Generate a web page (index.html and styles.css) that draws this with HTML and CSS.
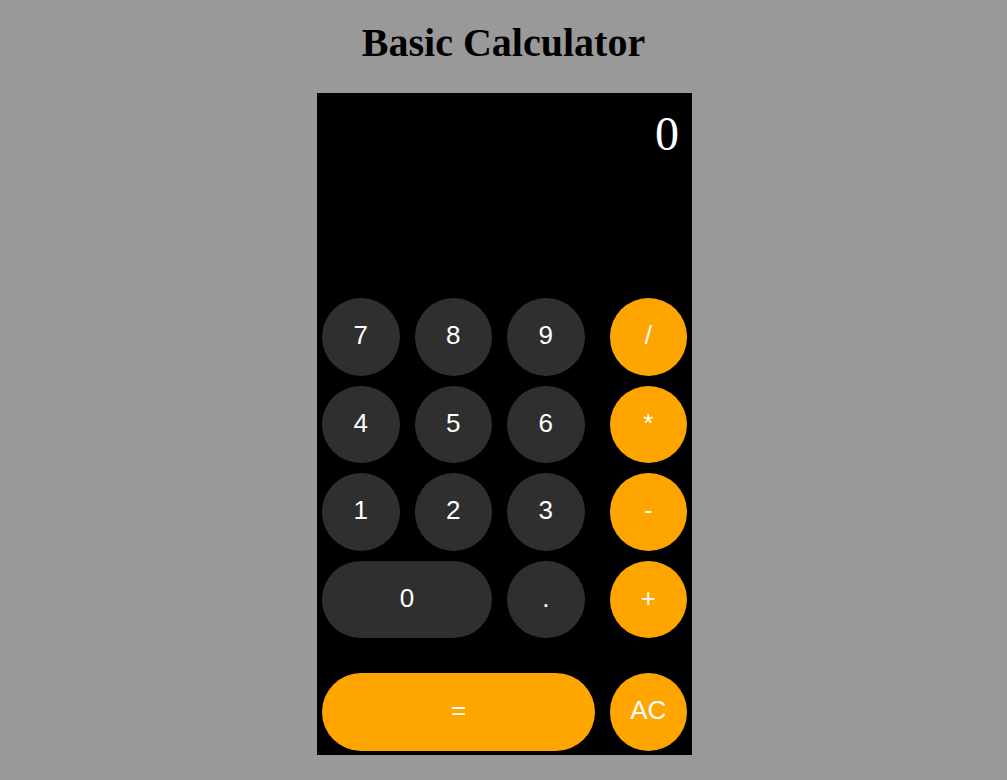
FILE: index.html
```html
<!DOCTYPE html>
<html lang="en">
<head>
<meta charset="utf-8">
<title>Basic Calculator</title>
<link rel="stylesheet" href="styles.css">
</head>
<body>
<h1 class="title">Basic Calculator</h1>
<div class="calculator">
  <div class="display">0</div>
  <div class="keypad">
    <button class="key num">7</button>
    <button class="key num">8</button>
    <button class="key num">9</button>
    <button class="key op">/</button>
    <button class="key num">4</button>
    <button class="key num">5</button>
    <button class="key num">6</button>
    <button class="key op">*</button>
    <button class="key num">1</button>
    <button class="key num">2</button>
    <button class="key num">3</button>
    <button class="key op">-</button>
    <button class="key num zero">0</button>
    <button class="key num">.</button>
    <button class="key op">+</button>
    <button class="key op equals">=</button>
    <button class="key op clear">AC</button>
  </div>
</div>
</body>
</html>
```

FILE: styles.css
```css
html, body {
  margin: 0;
  padding: 0;
}
body {
  background: #999999;
  font-family: "Liberation Serif", "Times New Roman", serif;
}
.title {
  margin: 20px 0 27px;
  font-size: 40px;
  font-weight: bold;
  line-height: 46px;
  text-align: center;
  color: #000;
}
.calculator {
  width: 375px;
  margin: 0 auto;
  position: relative;
  left: 1px;
  background: #000;
  padding-bottom: 4px;
}
.display {
  height: 205px;
  box-sizing: border-box;
  padding: 17px 13px 0;
  text-align: right;
  color: #fff;
  font-size: 48px;
  line-height: 48px;
}
.keypad {
  display: grid;
  grid-template-columns: repeat(3, 77.5px) 1fr;
  grid-template-rows: repeat(4, 77.5px) 102.5px;
  column-gap: 15px;
  row-gap: 10px;
  padding: 0 5px;
}
.key {
  border: none;
  margin: 0;
  padding: 0 0 2px;
  width: 77.5px;
  height: 77.5px;
  border-radius: 39px;
  color: #fff;
  font-family: "Liberation Sans", Arial, sans-serif;
  font-size: 26px;
  cursor: pointer;
}
.num {
  background: #2f2f2f;
}
.op {
  background: #ffa500;
  justify-self: end;
}
.zero {
  grid-column: span 2;
  width: 100%;
}
.equals {
  grid-column: span 3;
  justify-self: start;
  align-self: end;
  width: 273px;
}
.clear {
  align-self: end;
}
```
